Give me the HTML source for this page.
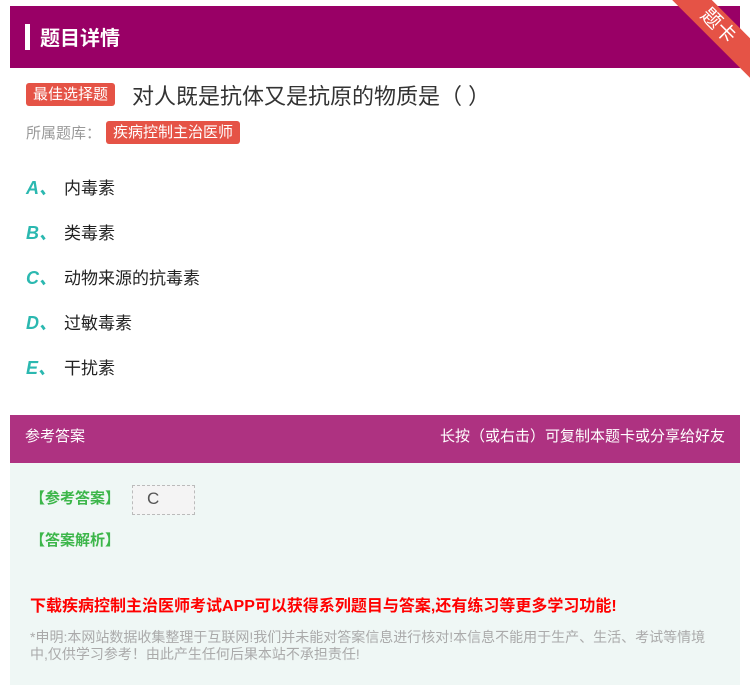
<!DOCTYPE html>
<html><head><meta charset="utf-8"><style>
*{margin:0;padding:0;box-sizing:border-box}
body{width:750px;height:685px;background:#fff;font-family:"Liberation Sans","Noto Sans CJK SC",sans-serif;position:relative;overflow:hidden}
.hdr{position:absolute;left:10px;top:6px;width:730px;height:62px;background:#990066}
.hdr .bar{position:absolute;left:15px;top:18px;width:5px;height:26px;background:#fff}
.hdr .t{position:absolute;left:30px;top:16px;color:#fff;font-size:20px;font-weight:bold}
.rib{position:absolute;right:-38px;top:12px;width:140px;height:28px;background:#e55346;transform:rotate(45deg);color:#fff;font-size:20px;text-align:center;line-height:28px}
.tag{position:absolute;background:#e55346;color:#fff;font-size:15px;border-radius:3px;padding:0 7px;line-height:23px}
.q{position:absolute;left:132px;top:79px;font-size:22px;color:#333}
.lib{position:absolute;left:26px;top:122px;font-size:15px;color:#999}
.opt{position:absolute;left:26px;font-size:17px;color:#222}
.opt b{color:#2bb8b0;font-style:italic;font-size:18px;display:inline-block;width:38px}
.ans{position:absolute;left:10px;top:415px;width:730px;height:270px;background:#eff7f5}
.ah{height:48px;background:#ae3281;color:#fff;font-size:15px;line-height:44px;padding:0 15px}
.ah span{float:right}
.g{position:absolute;color:#3cb64a;font-size:15px;font-weight:bold}
.red{position:absolute;left:20px;top:177px;color:#f00;font-size:16px;font-weight:bold;letter-spacing:0}
.note{position:absolute;left:20px;top:214px;width:690px;color:#aaa;font-size:14px;line-height:17px}
</style></head><body>
<div class="hdr"><div class="bar"></div><div class="t">题目详情</div></div>
<div class="rib">题卡</div>
<div class="tag" style="left:26px;top:83px">最佳选择题</div>
<div class="q">对人既是抗体又是抗原的物质是（ ）</div>
<div class="lib">所属题库：</div>
<div class="tag" style="left:106px;top:121px">疾病控制主治医师</div>
<div class="opt" style="top:174px"><b>A、</b>内毒素</div>
<div class="opt" style="top:219px"><b>B、</b>类毒素</div>
<div class="opt" style="top:264px"><b>C、</b>动物来源的抗毒素</div>
<div class="opt" style="top:309px"><b>D、</b>过敏毒素</div>
<div class="opt" style="top:354px"><b>E、</b>干扰素</div>
<div class="ans">
<div class="ah">参考答案<span>长按（或右击）可复制本题卡或分享给好友</span></div>
<div class="g" style="left:20px;top:72px">【参考答案】</div>
<div style="position:absolute;left:122px;top:70px;width:63px;height:30px;background:#f4f4f4;border:1px dashed #bbb;font-size:17px;padding-left:14px;line-height:26px;color:#555">C</div>
<div class="g" style="left:20px;top:114px">【答案解析】</div>
<div class="red">下载疾病控制主治医师考试APP可以获得系列题目与答案,还有练习等更多学习功能!</div>
<div class="note">*申明:本网站数据收集整理于互联网!我们并未能对答案信息进行核对!本信息不能用于生产、生活、考试等情境中,仅供学习参考！由此产生任何后果本站不承担责任!</div>
</div>
</body></html>
